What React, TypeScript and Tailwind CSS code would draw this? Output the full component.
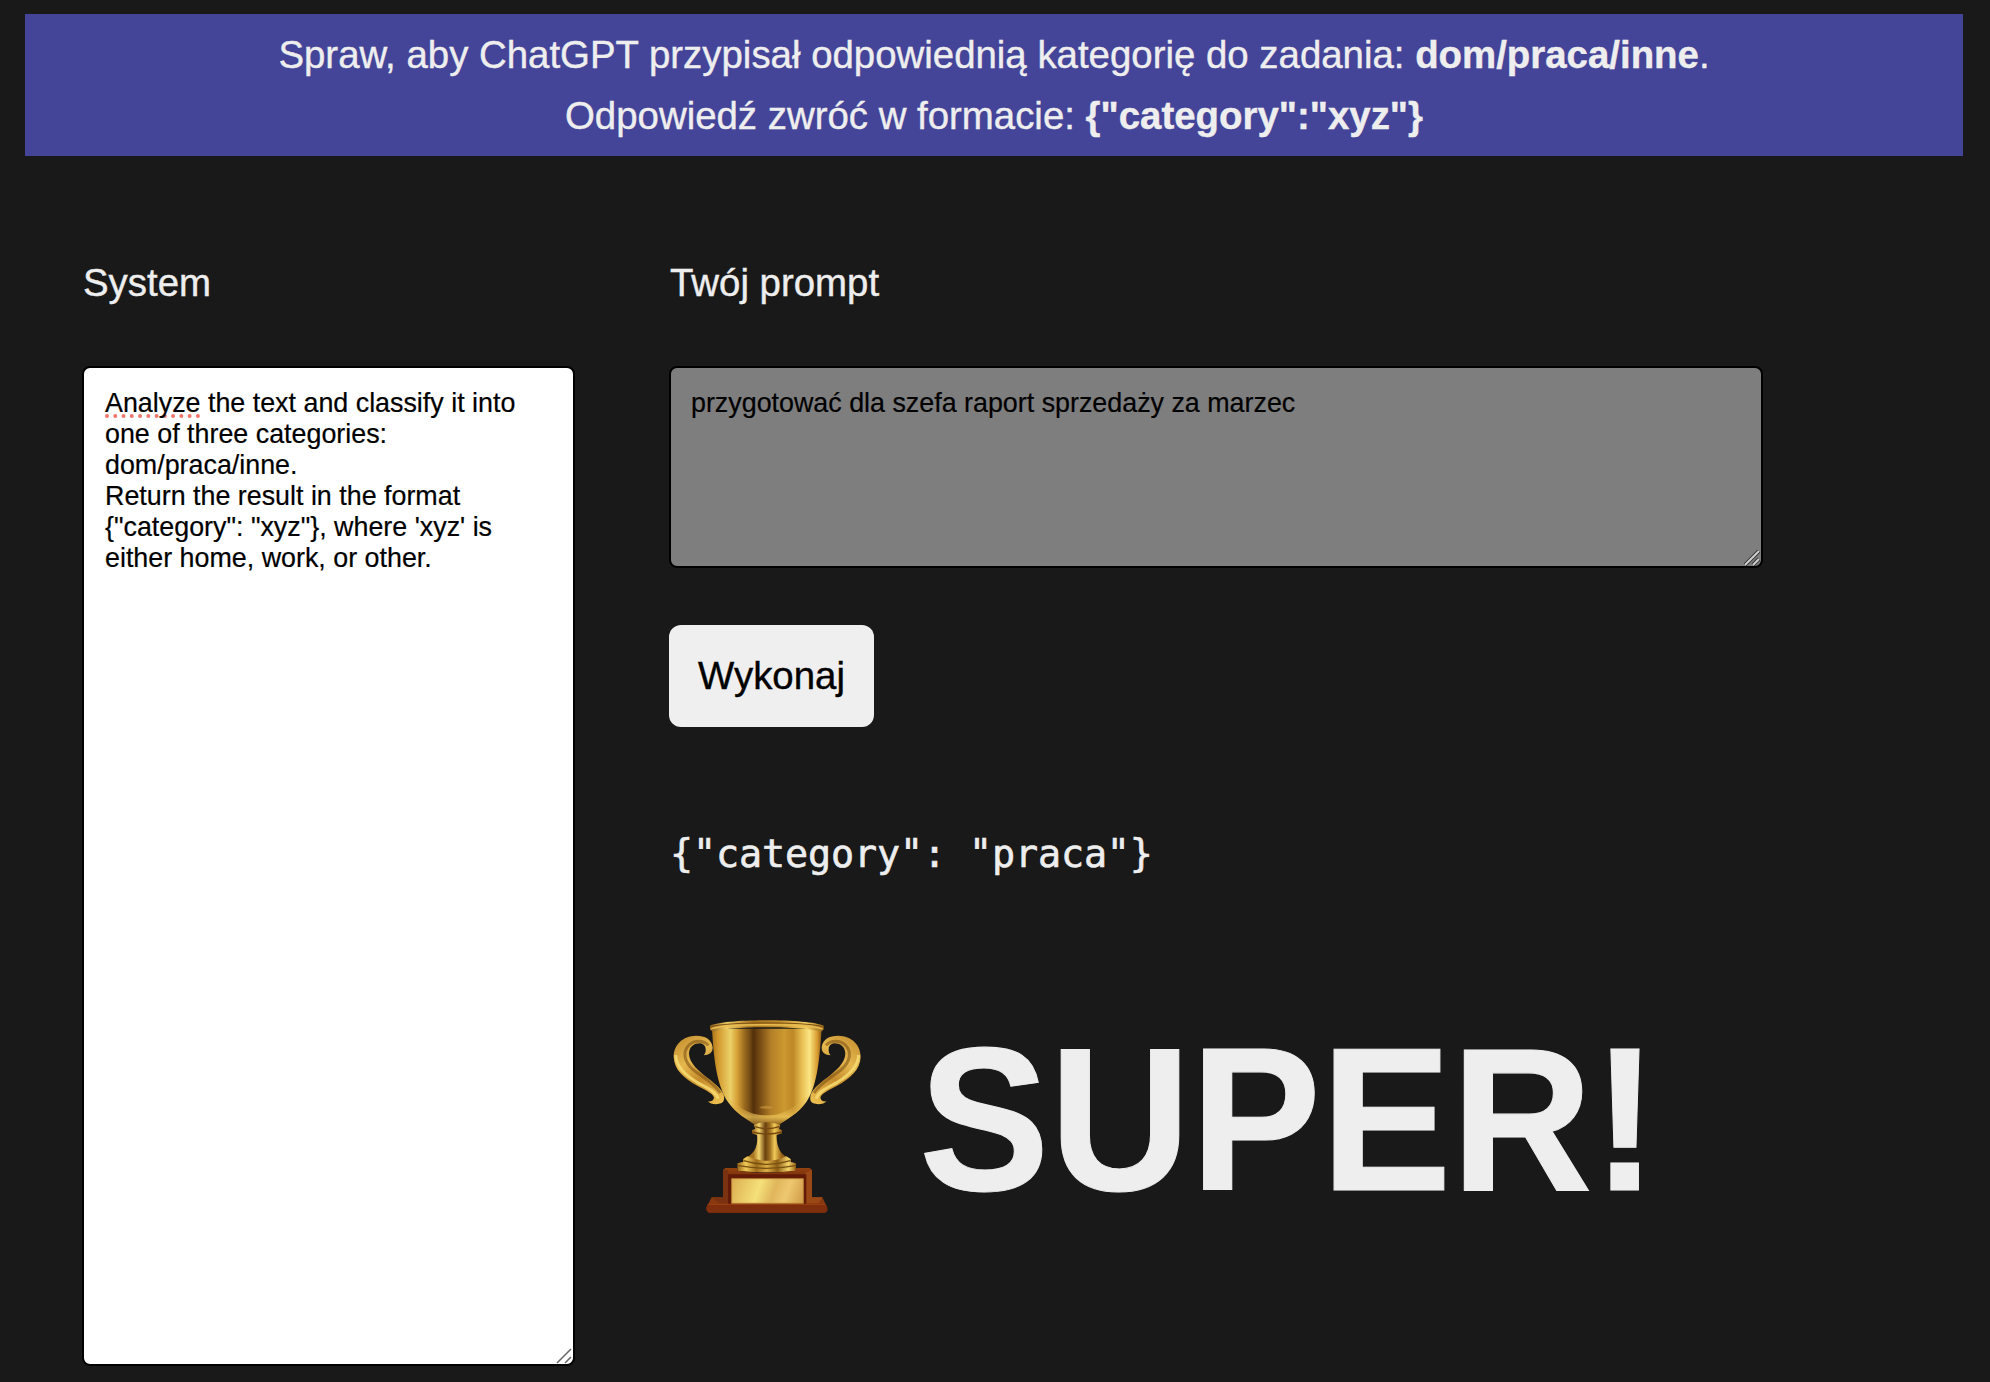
function Trophy() {
  return (
    <svg className="block h-[200px] w-[195px] shrink-0" viewBox="87 81 585 600" fill="none">
      <defs>
        <linearGradient id="cup" x1="215" x2="545" y1="0" y2="0" gradientUnits="userSpaceOnUse">
          <stop offset="0" stopColor="#a8741a" />
          <stop offset=".06" stopColor="#d39a2e" />
          <stop offset=".17" stopColor="#ecd069" />
          <stop offset=".23" stopColor="#d8a338" />
          <stop offset=".3" stopColor="#98691d" />
          <stop offset=".34" stopColor="#7a5016" />
          <stop offset=".38" stopColor="#54300a" />
          <stop offset=".45" stopColor="#7d5015" />
          <stop offset=".54" stopColor="#b38028" />
          <stop offset=".66" stopColor="#cc9830" />
          <stop offset=".74" stopColor="#bd8827" />
          <stop offset=".82" stopColor="#e8bf52" />
          <stop offset=".89" stopColor="#fbe683" />
          <stop offset=".96" stopColor="#d99b30" />
          <stop offset="1" stopColor="#8f5d15" />
        </linearGradient>
        <linearGradient id="bowl" x1="0" x2="0" y1="310" y2="410" gradientUnits="userSpaceOnUse">
          <stop offset="0" stopColor="#e3b04a" stopOpacity="0" />
          <stop offset=".45" stopColor="#e0ae48" stopOpacity=".4" />
          <stop offset=".7" stopColor="#f0c95c" stopOpacity=".7" />
          <stop offset="1" stopColor="#6e430d" />
        </linearGradient>
        <linearGradient id="rim" x1="210" x2="550" y1="0" y2="0" gradientUnits="userSpaceOnUse">
          <stop offset="0" stopColor="#8d5f17" />
          <stop offset=".15" stopColor="#f1cd64" />
          <stop offset=".38" stopColor="#a9751e" />
          <stop offset=".6" stopColor="#c08a28" />
          <stop offset=".85" stopColor="#f3cf60" />
          <stop offset="1" stopColor="#9a6819" />
        </linearGradient>
        <linearGradient id="handle" x1="100" x2="250" y1="140" y2="340" gradientUnits="userSpaceOnUse">
          <stop offset="0" stopColor="#c08a2c" />
          <stop offset=".35" stopColor="#e6b84e" />
          <stop offset=".6" stopColor="#c58c2b" />
          <stop offset="1" stopColor="#f0c253" />
        </linearGradient>
        <linearGradient id="stem" x1="340" x2="425" y1="0" y2="0" gradientUnits="userSpaceOnUse">
          <stop offset="0" stopColor="#a87420" />
          <stop offset=".2" stopColor="#f2d46d" />
          <stop offset=".42" stopColor="#6b4210" />
          <stop offset=".58" stopColor="#9c6c1e" />
          <stop offset=".75" stopColor="#f0c956" />
          <stop offset="1" stopColor="#966218" />
        </linearGradient>
        <linearGradient id="foot" x1="293" x2="468" y1="0" y2="0" gradientUnits="userSpaceOnUse">
          <stop offset="0" stopColor="#9a681b" />
          <stop offset=".14" stopColor="#f1ca59" />
          <stop offset=".32" stopColor="#a06d1c" />
          <stop offset=".5" stopColor="#dcae47" />
          <stop offset=".68" stopColor="#8e5d15" />
          <stop offset=".87" stopColor="#f4d56a" />
          <stop offset="1" stopColor="#9a641a" />
        </linearGradient>
        <linearGradient id="wood" x1="0" x2="0" y1="534" y2="668" gradientUnits="userSpaceOnUse">
          <stop offset="0" stopColor="#93420f" />
          <stop offset=".2" stopColor="#7b2e0c" />
          <stop offset=".72" stopColor="#8a3b10" />
          <stop offset="1" stopColor="#7f2c0c" />
        </linearGradient>
        <linearGradient id="plate" x1="275" x2="490" y1="566" y2="640" gradientUnits="userSpaceOnUse">
          <stop offset="0" stopColor="#dcae50" />
          <stop offset=".38" stopColor="#f5e07a" />
          <stop offset=".58" stopColor="#e0b65c" />
          <stop offset=".75" stopColor="#eec870" />
          <stop offset="1" stopColor="#cf9b45" />
        </linearGradient>
        <g id="arm">
          <path
            d="M218 172C215 148 196 137 168 137C128 138 101 164 101 201C102 238 132 266 173 288C201 303 219 311 222 323C220 333 212 335 204 334C210 344 234 344 243 340C252 336 254 327 251 314C242 292 221 278 202 263C177 243 148 220 147 191C148 169 163 160 180 160C190 161 197 168 197 177C198 185 195 192 191 196C207 196 219 188 218 172Z"
            fill="url(#handle)"
          />
          <path d="M205 166C191 149 162 150 147 165C127 185 132 213 157 237C182 258 222 279 241 309" stroke="#794c12" strokeWidth="9" opacity=".55" />
          <path d="M107 195C108 231 137 256 171 277C198 292 228 303 234 326" stroke="#f6dc72" strokeWidth="9" opacity=".85" />
        </g>
      </defs>
      <use href="#arm" />
      <use href="#arm" transform="matrix(-1 0 0 1 763 0)" />
      <path d="M216 116C221 202 229 284 264 336C288 371 322 389 350 407H411C440 389 475 370 499 336C533 286 539 202 545 116Z" fill="url(#cup)" />
      <path d="M226 260C232 290 245 310 264 336C288 371 322 389 350 407H411C440 389 475 370 499 336C517 309 526 290 532 260C490 350 430 376 380 376C330 376 270 350 226 260Z" fill="url(#bowl)" />
      <path d="M357 353Q379 341 401 353Q379 360 357 353Z" fill="#d3a047" opacity=".5" />
      <path d="M210 107C251 85 508 85 551 107V119L541 126C504 107 258 107 220 126L210 119Z" fill="url(#rim)" />
      <path d="M214 110C258 95 504 95 547 110" stroke="#7a5014" strokeWidth="3" />
      <path d="M213 117C255 100 506 100 548 117" stroke="#e9bd52" strokeWidth="4" />
      <path d="M341 404Q381 389 421 404L417 416L426 421V430L410 435C409 464 418 488 439 501L452 507V516L467 520V542Q381 551 293 542V520L310 516V507L322 501C347 487 354 464 351 435L336 430V421L346 416Z" fill="url(#stem)" />
      <path d="M346 410Q381 422 418 410M337 426Q381 438 426 426" stroke="#73470e" strokeWidth="4" />
      <path d="M322 499Q381 526 439 499L452 507V516L467 520V542Q381 551 293 542V520L310 516V507Z" fill="url(#foot)" />
      <path d="M311 512Q381 534 451 512M295 527Q381 543 466 527" stroke="#77500f" strokeWidth="4" />
      <path d="M249 540L256 534H292V542Q381 554 467 542V534H509L516 540V622H547L562 654V663L556 668H206L199 661V653L215 622H249Z" fill="url(#wood)" />
      <path d="M249 540H264V640H237L215 622H249Z" fill="#7a3210" />
      <path d="M496 548L516 540V622H547L535 640H496Z" fill="#9a4916" />
      <path d="M264 553H499V642H264Z" fill="#611b07" />
      <path d="M202 642L558 642L562 656L554 668H206L199 656Z" fill="#7e2e0d" />
      <path d="M206 643H555" stroke="#963f13" strokeWidth="4" />
      <path d="M275 566H490V640H275Z" fill="url(#plate)" stroke="#b77e33" strokeWidth="3" />
    </svg>
  );
}

function Grip({ light = false }: { light?: boolean }) {
  return (
    <svg className="absolute right-px bottom-0 size-4" viewBox="0 0 16 16" fill="none">
      {light && <path d="M1 15L15 1M9 15L15 9" stroke="#333" strokeWidth="4" />}
      <path d="M1 15L15 1M9 15L15 9" stroke={light ? "#cfcfcf" : "#666"} strokeWidth={light ? 2 : 1.5} />
    </svg>
  );
}

export default function App() {
  return (
    <div className="h-[1382px] w-[1990px] overflow-hidden bg-[#191919] pt-[14px] pl-[25px] font-['Liberation_Sans',Arial,sans-serif] text-[38.4px] text-[#eee] [-webkit-text-stroke:0.4px_currentColor]">
      <header className="h-[142px] w-[1938px] bg-[#444499] pt-[10px] text-center leading-[61px]">
        <p>
          Spraw, aby ChatGPT przypisał odpowiednią kategorię do zadania: <b>dom/praca/inne</b>.
        </p>
        <p>
          Odpowiedź zwróć w formacie: <b>{'{"category":"xyz"}'}</b>
        </p>
      </header>
      <main className="flex gap-[94px] pt-[96px] pl-[57px]">
        <section className="w-[493px]">
          <h2 className="h-[114px] pl-px leading-[61px]">System</h2>
          <div className="relative h-[1000px] rounded-lg border-2 border-black bg-white px-[21px] pt-[20px] text-[26.85px] leading-[31px] text-black [-webkit-text-stroke:0.2px_currentColor]">
            <span className="underline decoration-[#f0766c] decoration-dotted decoration-[4px] underline-offset-[2px] [text-decoration-skip-ink:none]">Analyze</span> the text and classify it into
            <br />
            one of three categories:
            <br />
            dom/praca/inne.
            <br />
            Return the result in the format
            <br />
            {'{"category": "xyz"}, where \'xyz\' is'}
            <br />
            either home, work, or other.
            <Grip />
          </div>
        </section>
        <section className="w-[1094px]">
          <h2 className="h-[114px] pl-px leading-[61px]">Twój prompt</h2>
          <div className="relative h-[202px] rounded-lg border-2 border-black bg-[#7e7e7e] px-[20px] pt-[20px] text-[26.85px] leading-[31px] text-black [-webkit-text-stroke:0.2px_currentColor]">
            przygotować dla szefa raport sprzedaży za marzec
            <Grip light />
          </div>
          <button className="mt-[57px] block h-[102px] w-[205px] rounded-xl bg-[#efefef] text-black">Wykonaj</button>
          <pre className="mt-[96px] pl-px font-['DejaVu_Sans_Mono',monospace] leading-[61px] tracking-[-0.12px] [-webkit-text-stroke:0.6px_currentColor]">{'{"category": "praca"}'}</pre>
          <div className="mt-[133px] flex h-[200px] items-center">
            <Trophy />
            <strong className="mt-[4px] ml-[55px] origin-center scale-y-[1.045] text-[195.5px] leading-[200px] [-webkit-text-stroke:1px_currentColor]">SUPER!</strong>
          </div>
        </section>
      </main>
    </div>
  );
}
